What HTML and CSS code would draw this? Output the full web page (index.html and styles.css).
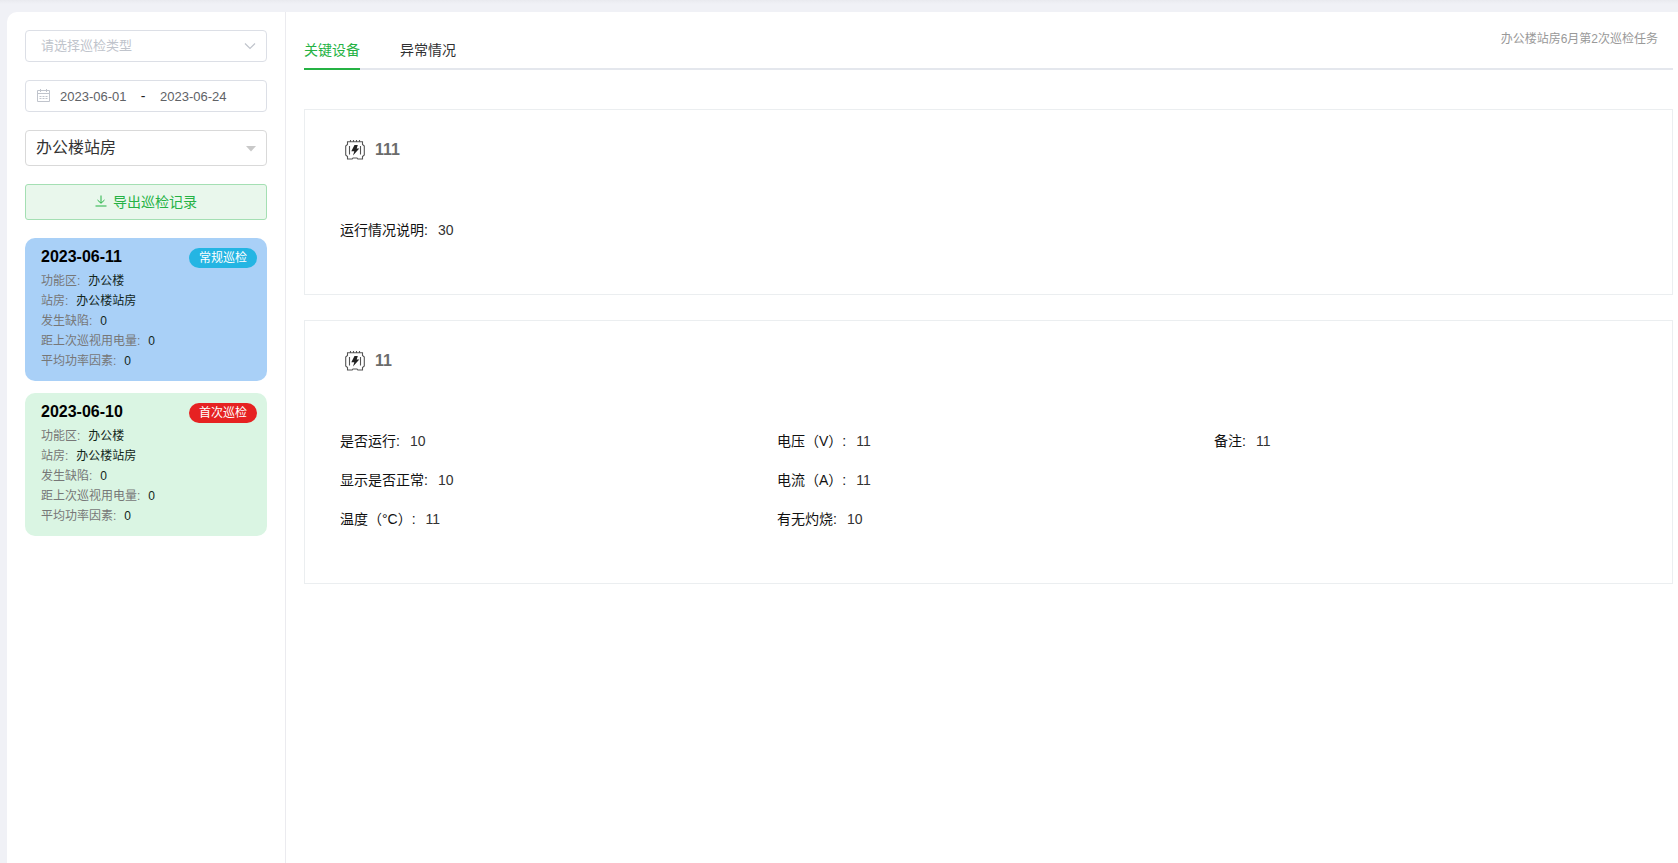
FILE: index.html
```html
<!DOCTYPE html>
<html lang="zh-CN">
<head>
<meta charset="utf-8">
<title>巡检记录</title>
<link rel="stylesheet" href="styles.css">
</head>
<body>
<svg class="sprite" aria-hidden="true">
  <symbol id="device" viewBox="0 0 20 20">
    <g fill="none" stroke="#555" stroke-width="1.100">
      <path d="M2.500 1.800H17.500V4.500L19.300 6V15L17.500 16.500V19H12.800L12 18H8L7.200 19H2.500V16.500L.7 15V6L2.500 4.500Z"/>
      <path d="M5.500 0V2M8.500 0V2M11.500 0V2M14.500 0V2M4.500 6V14.500M15.500 6V14.500"/>
    </g>
    <path d="M9.500 5H12.800L11.700 8.500H14.300L8 15.500L9.300 11.300H6.300Z" fill="#222"/>
  </symbol>
</svg>
<div class="page">
  <aside class="sidebar">
    <div class="field">
      <select class="control control-type" aria-label="巡检类型">
        <option>请选择巡检类型</option>
      </select>
      <svg class="chevron" viewBox="0 0 12 8" aria-hidden="true"><path d="M1 1.500L6 6.500L11 1.500" fill="none" stroke="#c0c4cc" stroke-width="1.200"/></svg>
    </div>
    <div class="control date-range">
      <svg class="calendar" viewBox="0 0 14 14" aria-hidden="true">
        <g fill="none" stroke="#c0c4cc"><path d="M1.500 1.500H13.500V12.500H1.500ZM1.500 4.500H13.500M4.500 0V3M10.500 0V3"/><path d="M3.500 7.500H11.500M3.500 9.500H11.500" stroke-dasharray="2 1"/></g>
      </svg>
      <input class="date" type="text" value="2023-06-01" aria-label="开始日期">
      <span class="dash">-</span>
      <input class="date" type="text" value="2023-06-24" aria-label="结束日期">
    </div>
    <div class="field">
      <select class="control control-station" aria-label="站房">
        <option>办公楼站房</option>
      </select>
      <svg class="caret" viewBox="0 0 10 6" aria-hidden="true"><path d="M0 0H10L5 5.500Z" fill="#c9c9c9"/></svg>
    </div>
    <button class="export" type="button">
      <svg class="download" viewBox="0 0 12 12" aria-hidden="true"><path d="M6 .5V8M2.500 5L6 8.300L9.500 5M.5 11H11.500" fill="none" stroke="currentColor"/></svg>
      <span>导出巡检记录</span>
    </button>
    <div class="records">
      <article class="record record-active">
        <header class="record-head"><h3 class="record-date">2023-06-11</h3><span class="badge badge-routine">常规巡检</span></header>
        <dl class="record-list">
          <div class="record-row"><dt>功能区:</dt><dd>办公楼</dd></div>
          <div class="record-row"><dt>站房:</dt><dd>办公楼站房</dd></div>
          <div class="record-row"><dt>发生缺陷:</dt><dd>0</dd></div>
          <div class="record-row"><dt>距上次巡视用电量:</dt><dd>0</dd></div>
          <div class="record-row"><dt>平均功率因素:</dt><dd>0</dd></div>
        </dl>
      </article>
      <article class="record">
        <header class="record-head"><h3 class="record-date">2023-06-10</h3><span class="badge badge-first">首次巡检</span></header>
        <dl class="record-list">
          <div class="record-row"><dt>功能区:</dt><dd>办公楼</dd></div>
          <div class="record-row"><dt>站房:</dt><dd>办公楼站房</dd></div>
          <div class="record-row"><dt>发生缺陷:</dt><dd>0</dd></div>
          <div class="record-row"><dt>距上次巡视用电量:</dt><dd>0</dd></div>
          <div class="record-row"><dt>平均功率因素:</dt><dd>0</dd></div>
        </dl>
      </article>
    </div>
  </aside>
  <main class="main">
    <header class="topbar">
      <nav class="tabs">
        <button class="tab tab-active" type="button">关键设备</button>
        <button class="tab" type="button">异常情况</button>
      </nav>
      <span class="task">办公楼站房6月第2次巡检任务</span>
    </header>
    <div class="panels">
      <section class="panel">
        <h2 class="panel-title"><svg class="device" aria-hidden="true"><use href="#device"/></svg>111</h2>
        <dl class="items">
          <div class="item"><dt>运行情况说明:</dt><dd>30</dd></div>
        </dl>
      </section>
      <section class="panel">
        <h2 class="panel-title"><svg class="device" aria-hidden="true"><use href="#device"/></svg>11</h2>
        <dl class="items">
          <div class="item"><dt>是否运行:</dt><dd>10</dd></div>
          <div class="item"><dt>电压（V）:</dt><dd>11</dd></div>
          <div class="item"><dt>备注:</dt><dd>11</dd></div>
          <div class="item"><dt>显示是否正常:</dt><dd>10</dd></div>
          <div class="item item-wide"><dt>电流（A）:</dt><dd>11</dd></div>
          <div class="item"><dt>温度（°C）:</dt><dd>11</dd></div>
          <div class="item"><dt>有无灼烧:</dt><dd>10</dd></div>
        </dl>
      </section>
    </div>
  </main>
</div>
</body>
</html>
```

FILE: styles.css
```css
* { box-sizing: border-box; }

body, h2, h3, dl, dd { margin: 0; }

body {
  background: linear-gradient(#e9eaef, #f0f1f6 4px);
  color: #222;
  font-family: "Liberation Sans", "Noto Sans CJK SC", sans-serif;
  font-size: 14px;
}

button, input, select { font-family: inherit; }

.sprite { display: none; }

svg { display: block; }

.page {
  display: flex;
  min-height: calc(100vh - 12px);
  margin: 12px 0 0 7px;
  background: #fff;
  border-top-left-radius: 10px;
}

/* Sidebar */
.sidebar {
  display: flex;
  flex: none;
  flex-direction: column;
  gap: 18px;
  width: 279px;
  padding: 18px 18px 0;
  border-right: 1px solid #ebebef;
}

.field { position: relative; }

.control {
  display: block;
  width: 100%;
  height: 32px;
  border: 1px solid #dcdfe6;
  border-radius: 4px;
  background: #fff;
  appearance: none;
  outline: none;
}

.control-type {
  padding: 0 30px 2px 15px;
  color: #c0c4cc;
  font-size: 13px;
}

.control-station {
  height: 36px;
  padding: 0 30px 2px 10px;
  border-color: #d9d9d9;
  color: #333;
  font-size: 16px;
}

.chevron, .caret {
  position: absolute;
  pointer-events: none;
}

.chevron { top: 12px; right: 11px; width: 12px; height: 8px; }
.caret { top: 16px; right: 11px; width: 10px; height: 6px; }

.date-range {
  display: flex;
  align-items: center;
  padding: 0 10px;
}

.calendar { width: 14px; height: 14px; margin-right: 10px; }

.date {
  width: 68px;
  padding: 0;
  border: 0;
  background: none;
  color: #606266;
  font-size: 13px;
  outline: none;
}

.dash { width: 32px; padding-right: 2px; text-align: center; }

.export {
  display: flex;
  align-items: center;
  justify-content: center;
  gap: 6px;
  height: 36px;
  padding: 0 6px 2px;
  border: 1px solid #a4dfb3;
  border-radius: 3px;
  background: #e9f7ec;
  color: #25b244;
  font-size: 14px;
}

.download { width: 12px; height: 12px; }

.records { display: grid; gap: 12px; }

.record {
  padding: 10px 10px 10px 16px;
  border-radius: 10px;
  background: #daf5e3;
  font-size: 12px;
}

.record-active { background: #a9d0f7; }

.record-head {
  display: flex;
  justify-content: space-between;
  margin-bottom: 3px;
}

.record-date { color: #000; font-size: 16px; line-height: 18px; }

.badge {
  padding: 0 10px;
  border-radius: 10px;
  color: #fff;
  line-height: 20px;
}

.badge-routine { background: #24b5e3; }
.badge-first { background: #e62222; }

.record-row {
  display: flex;
  gap: 8px;
  line-height: 20px;
}

.record-row dt { color: #777; }
.record-row dd { color: #12261a; }

/* Main area */
.main {
  flex: 1;
  min-width: 0;
  padding: 18px 5px 0 18px;
}

.topbar {
  display: flex;
  align-items: flex-start;
  justify-content: space-between;
  height: 40px;
  border-bottom: 2px solid #e4e7ed;
}

.tabs { display: flex; gap: 40px; }

.tab {
  height: 40px;
  padding: 0;
  border: 0;
  border-bottom: 2px solid transparent;
  background: none;
  color: #303133;
  font-size: 14px;
}

.tab-active { border-color: #25b244; color: #25b244; }

.task {
  padding-right: 15px;
  color: #999;
  font-size: 12px;
  line-height: 18px;
}

.panels {
  display: grid;
  gap: 25px;
  margin-top: 39px;
}

.panel {
  padding: 30px 21px 44px 35px;
  border: 1px solid #ebeef0;
}

.panel-title {
  display: flex;
  align-items: center;
  gap: 10px;
  padding-left: 5px;
  color: #6b6b6b;
  font-size: 16px;
  line-height: 20px;
}

.device { width: 20px; height: 20px; }

.items {
  display: grid;
  grid-template-columns: repeat(3, 1fr);
  margin-top: 51px;
}

.item {
  display: flex;
  gap: 10px;
  line-height: 39px;
}

.item-wide { grid-column: span 2; }

.item dt { color: #111; }
.item dd { color: #333; }
```
